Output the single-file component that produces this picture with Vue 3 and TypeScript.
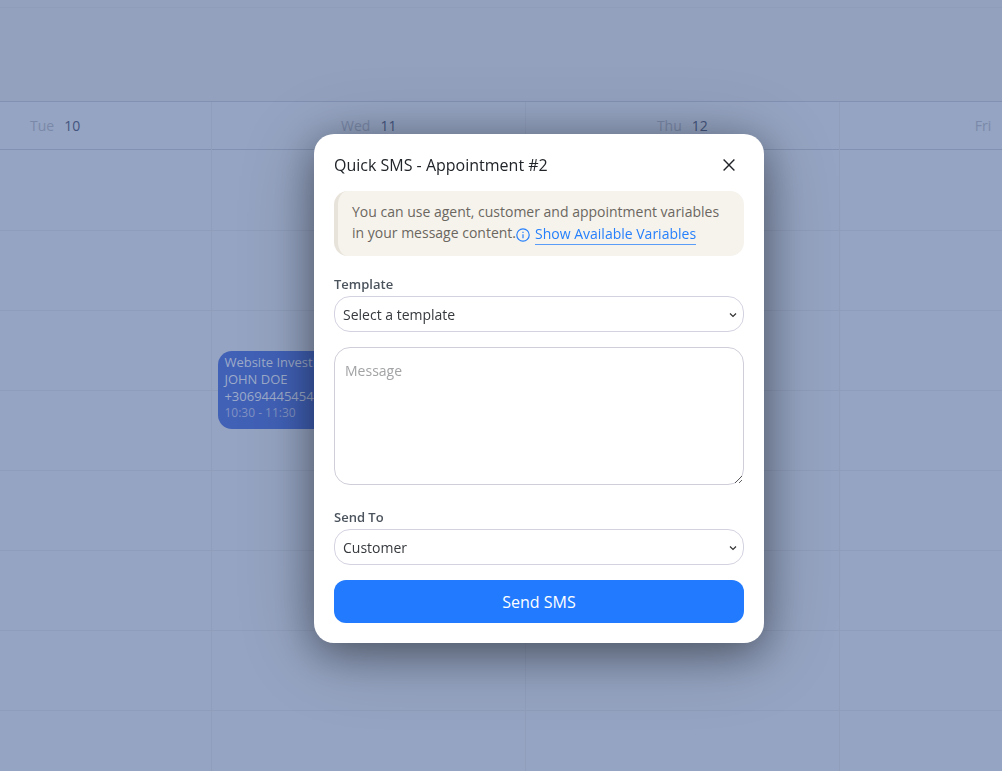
<script setup lang="ts">
import { ref } from 'vue'

interface Day {
  name: string
  date: number | null
}

const days: Day[] = [
  { name: 'Tue', date: 10 },
  { name: 'Wed', date: 11 },
  { name: 'Thu', date: 12 },
  { name: 'Fri', date: null },
]
const slots = 8

const isOpen = ref(true)
const template = ref('')
const message = ref('')
const recipient = ref('customer')
</script>

<template>
  <div class="page">
    <main class="calendar">
      <div class="toolbar"></div>
      <div class="week">
        <section v-for="day in days" :key="day.name" class="day">
          <header class="day-head">
            <span class="day-name">{{ day.name }}</span>
            <span class="day-date">{{ day.date }}</span>
          </header>
          <div v-for="slot in slots" :key="slot" class="slot">
            <article v-if="day.date === 11 && slot === 3" class="event">
              <span>Website Investigation</span>
              <span>JOHN DOE</span>
              <span>+306944454545</span>
              <span class="event-time">10:30 - 11:30</span>
            </article>
          </div>
        </section>
      </div>
    </main>

    <div v-if="isOpen" class="overlay">
      <form class="dialog" role="dialog" aria-labelledby="dialog-title" @submit.prevent>
        <header class="dialog-head">
          <h1 id="dialog-title">Quick SMS - Appointment #2</h1>
          <button type="button" class="close" aria-label="Close" @click="isOpen = false">
            <svg viewBox="0 0 14 14" width="14" height="14" aria-hidden="true">
              <path d="M1.6 1.6 12.4 12.4M12.4 1.6 1.6 12.4" />
            </svg>
          </button>
        </header>

        <p class="note">
          You can use agent, customer and appointment variables in your message content.<a href="#variables" class="variables"><svg viewBox="0 0 14 14" width="14" height="14" aria-hidden="true">
            <circle cx="7" cy="7" r="6.2" />
            <path d="M7 6.3V10.3M7 3.7V5" />
          </svg><span>Show Available Variables</span></a>
        </p>

        <div class="field">
          <label for="template">Template</label>
          <div class="select">
            <select id="template" v-model="template">
              <option value="">Select a template</option>
            </select>
            <svg viewBox="0 0 8 6" width="8" height="6" aria-hidden="true"><path d="M1 1.5 4 4.5 7 1.5" /></svg>
          </div>
        </div>

        <textarea v-model="message" placeholder="Message" aria-label="Message"></textarea>

        <div class="field">
          <label for="recipient">Send To</label>
          <div class="select">
            <select id="recipient" v-model="recipient">
              <option value="customer">Customer</option>
            </select>
            <svg viewBox="0 0 8 6" width="8" height="6" aria-hidden="true"><path d="M1 1.5 4 4.5 7 1.5" /></svg>
          </div>
        </div>

        <button type="submit" class="send">Send SMS</button>
      </form>
    </div>
  </div>
</template>

<style>
body {
  overflow: hidden;
}
</style>

<style scoped>
.page,
.page * {
  box-sizing: border-box;
}
.page {
  height: 100vh;
  overflow: hidden;
  background: #95a4c2;
  font-family: 'Segoe UI', 'Open Sans', 'Noto Sans', sans-serif;
  font-size: 14px;
  color: #212529;
}
.calendar {
  padding-top: 7px;
  background: #93a1bf;
}
.toolbar {
  height: 94px;
  border-top: 1px solid #8f9dbb;
}
.week {
  display: grid;
  grid-template-columns: repeat(4, 1fr);
  width: 125.2%;
  margin-left: -10.2%;
  border-top: 1px solid #8291b1;
  background: #95a4c2;
}
.day {
  min-width: 0;
  border-left: 1px solid #909ebc;
}
.day-head {
  display: flex;
  align-items: center;
  justify-content: center;
  gap: 10px;
  height: 48px;
  border-bottom: 1px solid #8291b1;
}
.day-name {
  color: #7a89a9;
}
.day-date {
  min-width: 16px;
  color: #44557f;
}
.slot {
  height: 80px;
  padding: 40px 6px 0;
  border-bottom: 1px solid #8f9dbb;
}
.slot:nth-child(2) {
  height: 81px;
}
.event {
  position: relative;
  display: flex;
  flex-direction: column;
  height: 78px;
  padding: 3px 6px;
  border-radius: 14px;
  background: #4161b7;
  color: #9dabc9;
  font-size: 13px;
  line-height: 17px;
  white-space: nowrap;
}
.event-time {
  color: #8091c2;
  font-size: 12px;
  line-height: 16px;
}

.overlay {
  position: fixed;
  inset: 0;
  display: flex;
  align-items: center;
  justify-content: center;
  padding: 6px 0 0 76px;
}
.dialog {
  display: flex;
  flex-direction: column;
  width: 450px;
  padding: 20px;
  border-radius: 20px;
  background: #fff;
  box-shadow: 0 10px 40px rgba(0, 0, 0, 0.4), 0 10px 80px rgba(0, 0, 0, 0.2);
}
.dialog-head {
  display: flex;
  align-items: center;
  justify-content: space-between;
  height: 22px;
  margin-bottom: 15px;
}
h1 {
  margin: 0;
  font-size: 16px;
  font-weight: 400;
  line-height: 22px;
}
.close {
  display: flex;
  padding: 8px;
  border: 0;
  background: none;
}
.close path {
  fill: none;
  stroke: #212529;
  stroke-width: 1.4;
}
.note {
  margin: 0 0 19px;
  padding: 10px 14px 11px;
  border-left: 4px solid #e8e3da;
  border-radius: 14px;
  background: #f6f3ed;
  color: #6b6760;
  line-height: 21px;
}
.variables {
  display: inline-flex;
  align-items: center;
  gap: 5px;
  vertical-align: -4px;
  color: #2680fb;
  line-height: 20px;
  text-decoration: none;
}
.variables svg {
  fill: none;
  stroke: #2680fb;
  stroke-width: 1.2;
}
.variables span {
  border-bottom: 1px solid #5a9cf8;
}
.field {
  display: flex;
  flex-direction: column;
}
label {
  margin-bottom: 3px;
  color: #4b535c;
  font-size: 13px;
  font-weight: 600;
  line-height: 18px;
}
.select {
  display: grid;
  align-items: center;
}
.select > * {
  grid-area: 1 / 1;
}
.select svg {
  justify-self: end;
  margin: 2px 7px 0 0;
  fill: none;
  stroke: #333;
  stroke-width: 1.2;
  pointer-events: none;
}
select {
  width: 100%;
  height: 36px;
  padding: 0 8px;
  border: 1px solid #d3d2e0;
  border-radius: 16px;
  appearance: none;
  background: #fff;
  color: #36393d;
  font: inherit;
}
textarea {
  display: block;
  width: 100%;
  height: 138px;
  margin: 15px 0 23px;
  padding: 12px 10px;
  border: 1px solid #cfced9;
  border-radius: 16px;
  background: #fff;
  color: #36393d;
  font: inherit;
  line-height: 22px;
  resize: vertical;
}
textarea::placeholder {
  color: #a2a3a5;
}
.send {
  height: 43px;
  margin-top: 15px;
  border: 0;
  border-radius: 12px;
  background: #227bfe;
  color: #fff;
  font: inherit;
  font-size: 16px;
}
</style>
